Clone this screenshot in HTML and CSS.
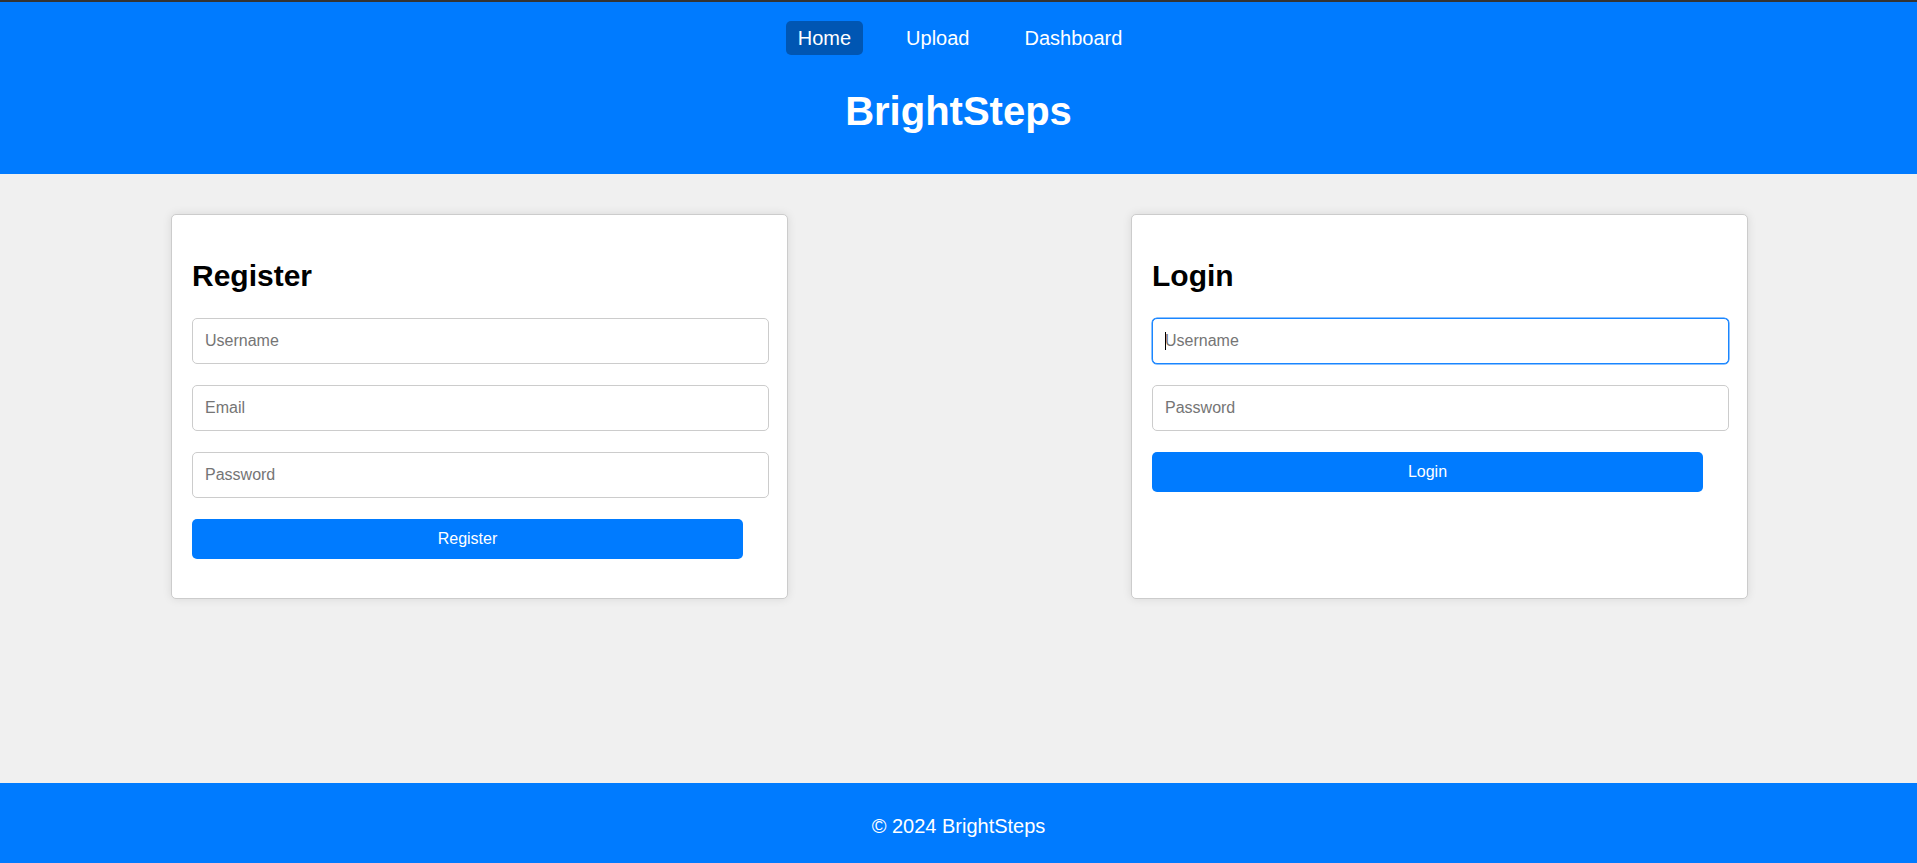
FILE: index.html
```html
<!DOCTYPE html>
<html lang="en">
<head>
<meta charset="utf-8">
<title>BrightSteps</title>
<link rel="stylesheet" href="styles.css">
</head>
<body>
<header class="site-header">
  <nav class="nav">
    <a href="#" class="nav-link active">Home</a>
    <a href="#" class="nav-link">Upload</a>
    <a href="#" class="nav-link">Dashboard</a>
  </nav>
  <h1 class="site-title">BrightSteps</h1>
</header>
<main class="main">
  <div class="cards">
    <section class="card">
      <h2 class="card-title">Register</h2>
      <form class="form">
        <input class="field" type="text" placeholder="Username">
        <input class="field" type="email" placeholder="Email">
        <input class="field" type="password" placeholder="Password">
        <button class="btn" type="button">Register</button>
      </form>
    </section>
    <section class="card">
      <h2 class="card-title">Login</h2>
      <form class="form">
        <div class="field-wrap">
          <input class="field focused" type="text" placeholder="Username">
          <span class="caret"></span>
        </div>
        <input class="field" type="password" placeholder="Password">
        <button class="btn" type="button">Login</button>
      </form>
    </section>
  </div>
</main>
<footer class="site-footer">© 2024 BrightSteps</footer>
</body>
</html>
```

FILE: styles.css
```css
* {
  box-sizing: border-box;
}

html, body {
  margin: 0;
  padding: 0;
}

body {
  font-family: "Liberation Sans", Arial, Helvetica, sans-serif;
  background: #f0f0f0;
  border-top: 2px solid #333333;
  min-height: 100vh;
  display: flex;
  flex-direction: column;
}

.site-header {
  background: #007bff;
  color: #ffffff;
  text-align: center;
  padding: 19px 0 40px;
}

.nav {
  display: flex;
  justify-content: center;
  gap: 31px;
  padding-left: 3px;
}

.nav-link {
  color: #ffffff;
  text-decoration: none;
  font-size: 20px;
  line-height: 24px;
  padding: 5px 12px;
  border-radius: 5px;
}

.nav-link.active {
  background: #0056b3;
}

.site-title {
  margin: 33px 0 0;
  font-size: 40px;
  line-height: 46px;
  font-weight: bold;
}

.main {
  flex: 1;
  padding-top: 40px;
}

.cards {
  display: flex;
  justify-content: space-between;
  align-items: stretch;
  padding: 0 169px 0 171px;
}

.card {
  width: 617px;
  padding: 20px;
  background: #ffffff;
  border: 1px solid #cccccc;
  border-radius: 5px;
  box-shadow: 0 0 10px rgba(0, 0, 0, 0.1);
}

.card-title {
  font-size: 30px;
  line-height: 34px;
  font-weight: bold;
  margin: 24px 0 25px;
  color: #000000;
}

.form {
  display: flex;
  flex-direction: column;
  align-items: flex-start;
  gap: 21px;
  padding-bottom: 19px;
}

.field-wrap {
  position: relative;
  width: 100%;
  display: block;
}

.field-wrap .field {
  display: block;
}

.caret {
  position: absolute;
  left: 13px;
  top: 14px;
  width: 1px;
  height: 18px;
  background: #000000;
}

.field {
  box-sizing: content-box;
  flex-shrink: 0;
  width: calc(100% - 24px);
  padding: 12px;
  border: 1px solid #cccccc;
  border-radius: 5px;
  font-family: "Liberation Sans", Arial, Helvetica, sans-serif;
  font-size: 16px;
  line-height: 20px;
  height: 20px;
  color: #000000;
  background: #ffffff;
  margin: 0;
  outline: none;
  caret-color: #000000;
}

.field::placeholder {
  color: #757575;
}

.field.focused,
.field:focus {
  border-color: #1a86ff;
  box-shadow: 0 0 0 0.5px #1a86ff;
}

.btn {
  width: calc(100% - 24px);
  padding: 11px;
  border: none;
  border-radius: 5px;
  background: #007bff;
  color: #ffffff;
  font-family: "Liberation Sans", Arial, Helvetica, sans-serif;
  font-size: 16px;
  line-height: 18px;
  cursor: pointer;
}

.site-footer {
  background: #007bff;
  color: #ffffff;
  text-align: center;
  font-size: 20px;
  line-height: 23px;
  padding: 32px 0 25px;
}
```
